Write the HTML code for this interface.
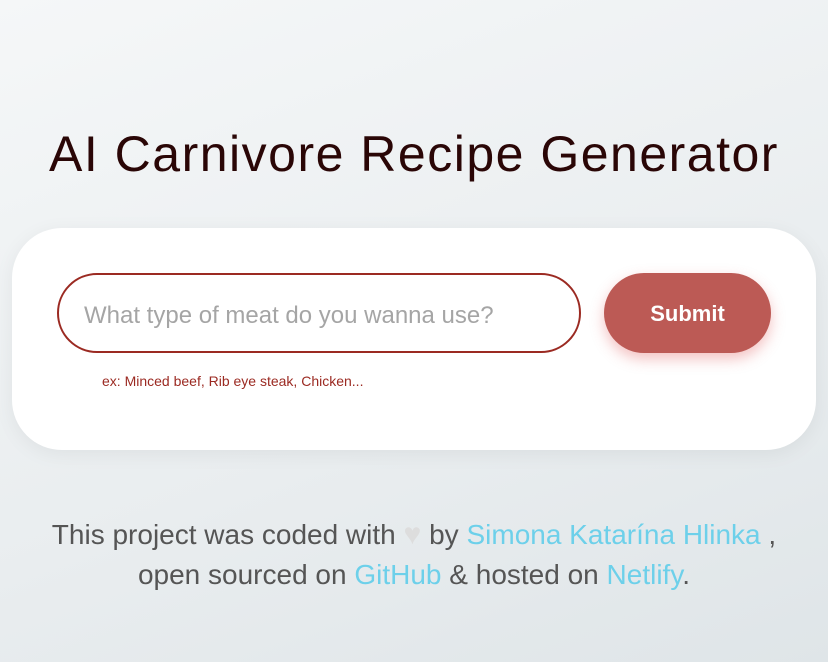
<!DOCTYPE html>
<html><head><meta charset="utf-8"><style>
html,body{margin:0;width:828px;height:662px;overflow:hidden}
body{background:linear-gradient(160deg,#f5f7f8 0%,#e9edef 60%,#dfe5e8 100%);font-family:"Liberation Sans",sans-serif;position:relative}
h1{position:absolute;top:124px;left:0;width:828px;text-align:center;margin:0;font-size:50px;font-weight:400;color:#2a0606;letter-spacing:1.5px;line-height:60px}
.card{position:absolute;left:12px;top:228px;width:804px;height:222px;background:#fff;border-radius:50px;box-shadow:0 4px 20px rgba(0,0,0,0.06)}
.inp{position:absolute;left:57px;top:273px;border:2px solid #9b2a22;border-radius:40px;box-sizing:border-box;width:524px;height:80px;}
.inp span{position:absolute;left:25px;top:27px;font-size:24px;color:#a5a5a5;white-space:nowrap}
.btn{position:absolute;left:604px;top:273px;width:167px;height:80px;border-radius:40px;background:#bc5a55;color:#fff;font-weight:bold;font-size:22px;text-align:center;line-height:82px;box-shadow:0 6px 14px rgba(220,80,80,0.35)}
.ex{position:absolute;left:102px;top:373px;font-size:14px;color:#9b2a22}
.foot{position:absolute;top:515px;left:0;width:828px;text-align:center;font-size:28px;color:#555;line-height:40px}
.heart{color:#ddd;font-size:30px}
a{color:#6dd0ea;text-decoration:none}
</style></head><body>
<h1>AI Carnivore Recipe Generator</h1>
<div class="card"></div>
<div class="inp"><span>What type of meat do you wanna use?</span></div>
<div class="btn">Submit</div>
<div class="ex">ex: Minced beef, Rib eye steak, Chicken...</div>
<div class="foot">This project was coded with <span class="heart">♥</span> by <a>Simona Katarína Hlinka</a> ,<br>open sourced on <a>GitHub</a> &amp; hosted on <a>Netlify</a>.</div>
</body></html>
